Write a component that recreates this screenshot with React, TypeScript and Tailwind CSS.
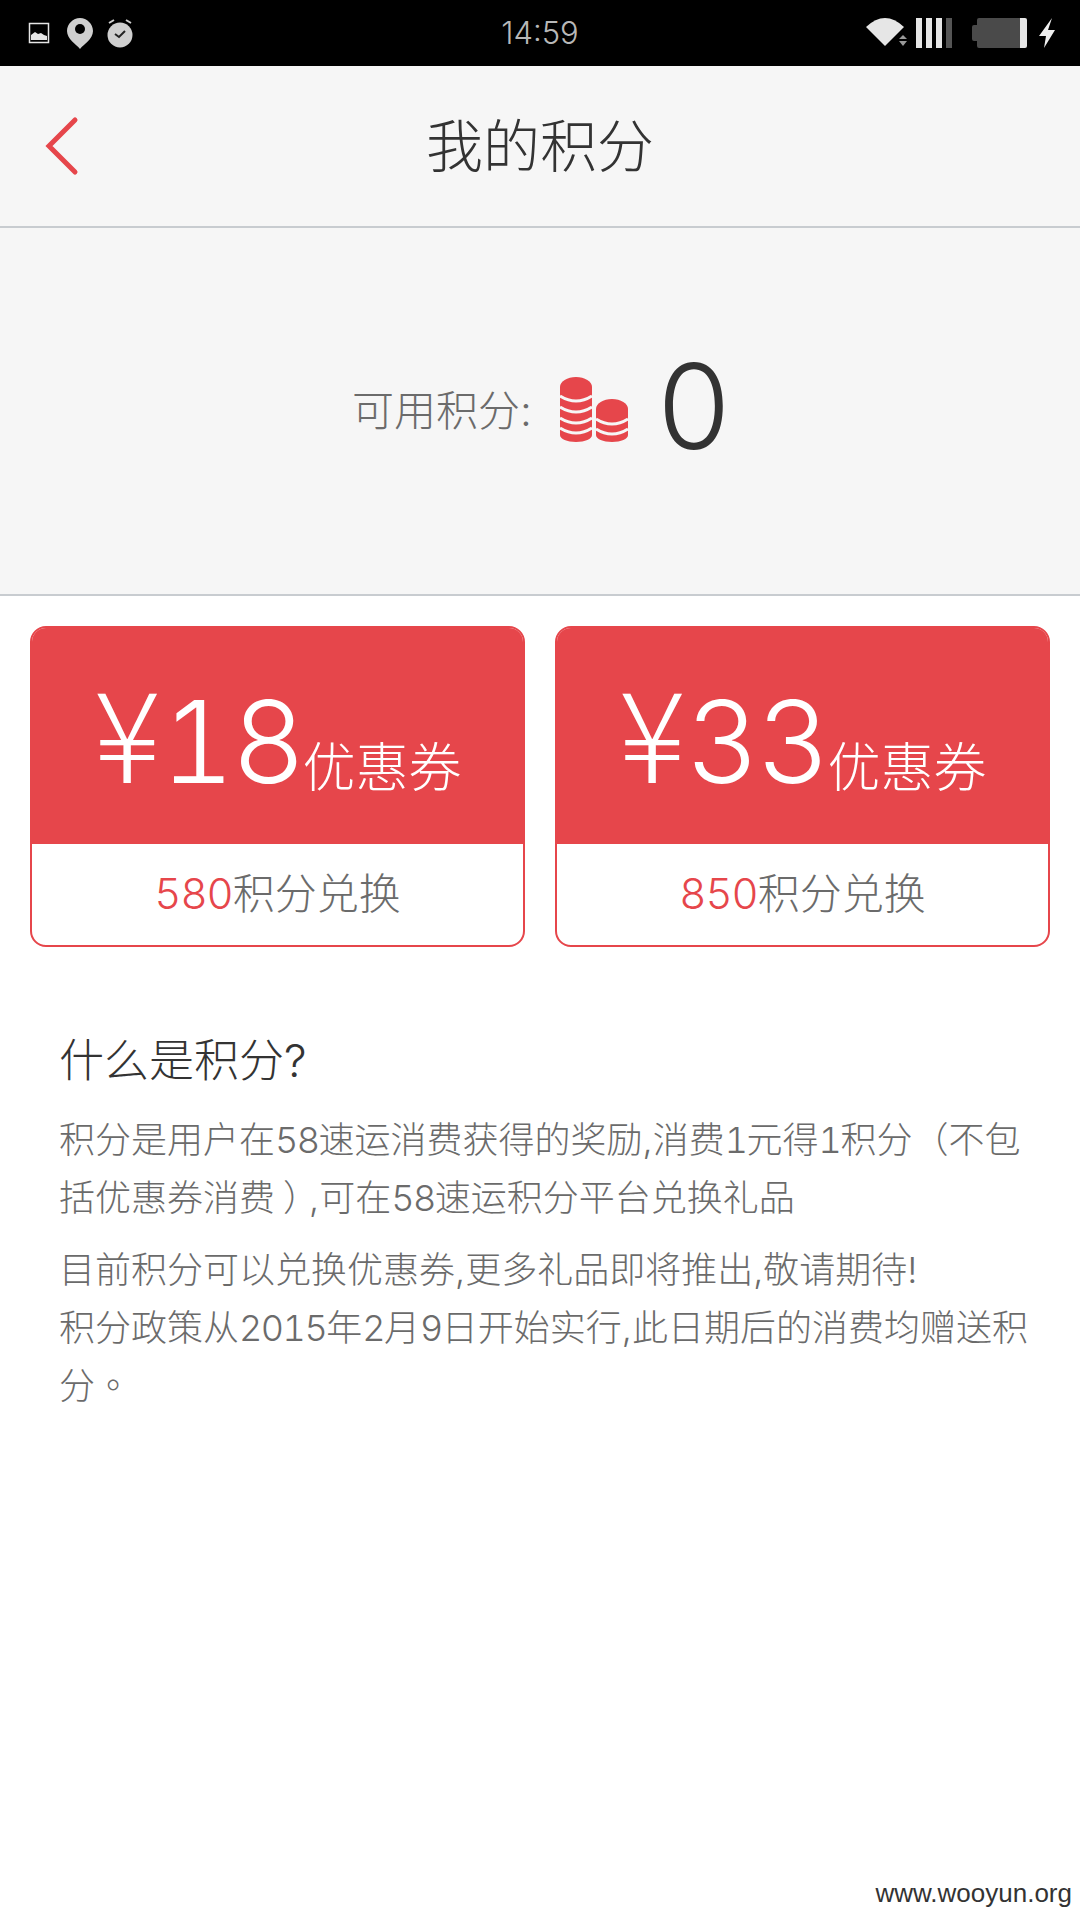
const cjkPunct = "font-['Noto_Sans_CJK_TC'] leading-none";

const vouchers = [
  { amount: '18', cost: '580' },
  { amount: '33', cost: '850' },
];

function Num({ children }: { children: string }) {
  return <span className="tabular-nums tracking-[-1.5px]">{children}</span>;
}

function StatusIcons() {
  return (
    <svg width="1080" height="66" viewBox="0 0 1080 66" className="absolute left-0 top-0">
      {/* picture */}
      <rect x="29.5" y="23.5" width="19" height="19" fill="none" stroke="#e6e6e6" strokeWidth="1.5" />
      <path d="M31 40v-5l4-3 3 2 3-1 3 2 3 1v4z" fill="#e6e6e6" />
      {/* pin */}
      <path d="M80 18c-7 0-13 6-13 13 0 8 9 13 13 18 4-5 13-10 13-18 0-7-6-13-13-13z" fill="#cfcfcf" />
      <circle cx="80" cy="29" r="5" fill="#000" />
      {/* alarm */}
      <circle cx="120" cy="35" r="12.5" fill="#cfcfcf" />
      <path d="M109 23l5-3M131 23l-5-3" stroke="#cfcfcf" strokeWidth="2" />
      <path d="M115 34l4 3 6-6" fill="none" stroke="#222" strokeWidth="2" />
      {/* wifi */}
      <path d="M866 27Q885 9 904 27L885 46z" fill="#e6e6e6" />
      <path d="M903 35l-4 4h8zM899 41h8l-4 5z" fill="#999" />
      {/* signal */}
      <rect x="916" y="18" width="6" height="30" fill="#e6e6e6" />
      <rect x="926" y="18" width="6" height="30" fill="#e6e6e6" />
      <rect x="936" y="18" width="6" height="30" fill="#e6e6e6" />
      <rect x="946" y="18" width="6" height="30" fill="#555" />
      {/* battery */}
      <path d="M977 25v-5q0-2 2-2h41v30h-41q-2 0-2-2v-5h-3q-2 0-2-2v-12q0-2 2-2z" fill="#4a4a4a" />
      <path d="M1020 18h5q2 0 2 2v26q0 2-2 2h-5z" fill="#e6e6e6" />
      {/* bolt */}
      <path d="M1052 18l-13 18h7l-2 12 11-18h-7z" fill="#f0f0f0" />
    </svg>
  );
}

function CoinStack({ x, bottom, topY, arcs }: { x: number; bottom: number; topY: number; arcs: number[] }) {
  return (
    <g>
      <path
        d={`M${x} ${topY + 10}a16 10 0 0 1 32 0V${bottom - 7}c0 4-7 7-16 7s-16-3-16-7z`}
        fill="#e6464b"
      />
      {arcs.map(y => (
        <path key={y} d={`M${x} ${y}Q${x + 16} ${y + 10} ${x + 32} ${y}`} fill="none" stroke="#f6f6f6" strokeWidth="3" />
      ))}
    </g>
  );
}

export default function App() {
  return (
    <div className="relative w-[1080px] h-[1920px] overflow-hidden bg-white font-['Inter','Noto_Sans_CJK_SC',sans-serif] font-light">
      <div className="relative h-[66px] bg-black flex items-center justify-center">
        <StatusIcons />
        <span className="text-[31px] text-[#b8b8b8]">14:59</span>
      </div>

      <div className="relative h-[162px] bg-[#f6f6f6] border-b-2 border-[#c8ccd0] flex items-center justify-center">
        <svg width="36" height="60" viewBox="0 0 36 60" className="absolute left-[43px] top-1/2 -translate-y-1/2">
          <path d="M32 4L6 30l26 26" fill="none" stroke="#e6464b" strokeWidth="5" strokeLinecap="round" />
        </svg>
        <h1 className="text-[57px] leading-none text-[#333] font-light">我的积分</h1>
      </div>

      <div className="h-[368px] bg-[#f6f6f6] border-b-2 border-[#c8ccd0] flex items-center justify-center pl-[4px]">
        <span className="text-[42px] text-[#6b6b6b] mr-[28px] mb-[2px]">可用积分:</span>
        <svg width="70" height="66" viewBox="0 0 70 66" className="mr-[26px] mb-[2px]">
          <CoinStack x={0} topY={0} bottom={65} arcs={[19, 30, 41, 51]} />
          <CoinStack x={36} topY={22} bottom={65} arcs={[42, 52]} />
        </svg>
        <span className="font-light tabular-nums text-[118px] leading-none text-[#333] mb-[10px]">0</span>
      </div>

      <div className="flex gap-[30px] px-[30px] pt-[30px]">
        {vouchers.map(v => (
          <div key={v.amount} className="w-[495px] h-[321px] rounded-[16px] border-2 border-[#e6464b] overflow-hidden">
            <div className="h-[216px] bg-[#e6464b] flex items-baseline justify-center text-white pt-[37px]">
              <span className="font-['Noto_Sans_CJK_SC'] font-light text-[126px] leading-none">¥</span>
              <span className="font-light tabular-nums tracking-[-3px] text-[114px] leading-none">{v.amount}</span>
              <span className="text-[53px] leading-none translate-y-[4px]">优惠券</span>
            </div>
            <div className="h-[98px] flex items-center justify-center text-[42px] text-[#6b6b6b]">
              <span className="text-[#e6464b] tabular-nums tracking-[-1px]">{v.cost}</span>
              积分兑换
            </div>
          </div>
        ))}
      </div>

      <div className="px-[59px] pt-[79px]">
        <h2 className="text-[45px] leading-[70px] text-[#333] font-light">什么是积分?</h2>
        <div className="mt-[15px] text-[36px] leading-[58px] text-[#6b6b6b]">
          <p className="whitespace-nowrap">积分是用户在<Num>58</Num>速运消费获得的奖励,消费<Num>1</Num>元得<Num>1</Num>积分<span className={cjkPunct}>（</span>不包</p>
          <p>括优惠券消费<span className={`${cjkPunct} ml-[8px] tracking-[-10px]`}>）</span>,可在<Num>58</Num>速运积分平台兑换礼品</p>
          <p className="mt-[14px]">目前积分可以兑换优惠券,更多礼品即将推出,敬请期待!</p>
          <p className="whitespace-nowrap">积分政策从<Num>2015</Num>年<Num>2</Num>月<Num>9</Num>日开始实行,此日期后的消费均赠送积</p>
          <p>分<span className={cjkPunct}>。</span></p>
        </div>
      </div>

      <span className="absolute right-[8px] bottom-[14px] font-['Liberation_Sans',sans-serif] font-normal text-[26px] leading-none text-[#333]">www.wooyun.org</span>
    </div>
  );
}
